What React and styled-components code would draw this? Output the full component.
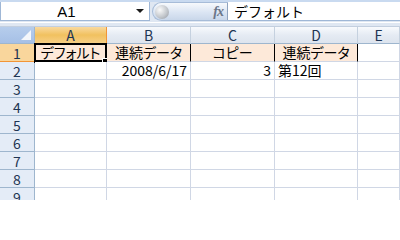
import React from 'react';
import styled, { createGlobalStyle, css } from 'styled-components';

const GlobalStyle = createGlobalStyle`
  html, body {
    margin: 0;
    padding: 0;
    background: #ffffff;
  }
  body {
    font-family: "Noto Sans CJK JP", "Liberation Sans", sans-serif;
  }
`;

const columns = ['A', 'B', 'C', 'D', 'E'];

const rows = [
  { n: 1, cells: ['デフォルト', '連続データ', 'コピー', '連続データ', ''] },
  { n: 2, cells: ['', '2008/6/17', '3', '第12回', ''] },
  { n: 3 },
  { n: 4 },
  { n: 5 },
  { n: 6 },
  { n: 7 },
  { n: 8 },
  { n: 9 },
];

// alignment per cell of row 2
const rowTwoAlign = ['left', 'right', 'right', 'left', 'left'];

const App = () => {
  return (
    <>
      <GlobalStyle />
      <Window>
        <FormulaBar>
          <NameBox>
            <NameText>A1</NameText>
            <DropArrow />
          </NameBox>
          <Orb>
            <OrbKnob />
            <Fx>fx</Fx>
          </Orb>
          <FormulaInput>デフォルト</FormulaInput>
        </FormulaBar>

        <Sheet>
          <Corner>
            <CornerTriangle />
          </Corner>
          {columns.map(col => (
            <ColHeader key={col} $selected={col === 'A'}>
              {col}
            </ColHeader>
          ))}

          {rows.map(row => (
            <React.Fragment key={row.n}>
              <RowHeader $selected={row.n === 1}>{row.n}</RowHeader>
              {columns.map((col, i) => {
                const value = row.cells ? row.cells[i] : '';
                const filled = row.n === 1 && i < 4;
                const align = row.n === 1 ? 'center' : rowTwoAlign[i];
                return (
                  <Cell
                    key={col}
                    $filled={filled}
                    $boxed={filled && i > 0}
                    $align={align}
                  >
                    {value}
                    {row.n === 1 && i === 0 && (
                      <Selection>
                        <FillHandle />
                      </Selection>
                    )}
                  </Cell>
                );
              })}
            </React.Fragment>
          ))}
        </Sheet>
      </Window>
    </>
  );
};

const Window = styled.div`
  width: 400px;
  height: 200px;
  overflow: hidden;
  background: #ffffff;
`;

const FormulaBar = styled.div`
  display: flex;
  align-items: stretch;
  height: 27px;
  box-sizing: border-box;
  padding: 2px 0 5px 0;
  background: linear-gradient(#c9daf0 0, #c9daf0 2px, #dfe7f2 2px);
  border-bottom: 1px solid #c3cfdf;
  position: relative;

  &::after {
    content: '';
    position: absolute;
    left: 0;
    right: 0;
    bottom: 3px;
    height: 1px;
    background: #ffffff;
  }
`;

const NameBox = styled.div`
  width: 150px;
  display: flex;
  align-items: center;
  background: #ffffff;
  border: 1px solid #9fb7d6;
  border-top: none;
  box-sizing: border-box;
`;

const NameText = styled.span`
  flex: 1;
  text-align: center;
  font-family: 'Liberation Sans', sans-serif;
  font-size: 15px;
  line-height: 17px;
  color: #000000;
  padding-right: 4px;
`;

const DropArrow = styled.span`
  width: 0;
  height: 0;
  margin-right: 5px;
  border-left: 4px solid transparent;
  border-right: 4px solid transparent;
  border-top: 4px solid #1a1a1a;
`;

const Orb = styled.div`
  width: 76px;
  margin-left: 2px;
  display: flex;
  align-items: center;
  justify-content: space-between;
  box-sizing: border-box;
  border-radius: 10px 0 0 10px;
  border: 1px solid #a7bcd8;
  border-right: 1px solid #8ea3bf;
  background: linear-gradient(#f7f9fc, #dbe5f3 55%, #c9d7ea);
`;

const OrbKnob = styled.span`
  width: 14px;
  height: 14px;
  margin-left: 2px;
  border-radius: 50%;
  background: radial-gradient(circle at 35% 35%, #fafafa 0, #c4c8cd 55%, #8f959d 100%);
`;

const Fx = styled.span`
  font-family: 'Liberation Serif', serif;
  font-style: italic;
  font-weight: bold;
  font-size: 14px;
  line-height: 16px;
  color: #6b7689;
  margin-right: 4px;
  letter-spacing: -1px;
`;

const FormulaInput = styled.div`
  flex: 1;
  display: flex;
  align-items: center;
  padding-left: 6px;
  background: #ffffff;
  border-bottom: 1px solid #9fb7d6;
  font-size: 14px;
  line-height: 16px;
  color: #000000;
`;

const Sheet = styled.div`
  display: grid;
  grid-template-columns: 35px 72px 84px 84px 83px 1fr;
  grid-template-rows: 17px;
  grid-auto-rows: 18px;
`;

const headerText = css`
  display: flex;
  align-items: center;
  justify-content: center;
  box-sizing: border-box;
  font-size: 14px;
  line-height: 14px;
  color: #1e3553;
  font-family: 'Noto Sans CJK JP', 'Liberation Sans', sans-serif;
`;

const Corner = styled.div`
  position: relative;
  box-sizing: border-box;
  background: linear-gradient(#b6cdec, #a6c0e6);
  border-right: 1px solid #9eb6ce;
  border-bottom: 1px solid #9eb6ce;
`;

const CornerTriangle = styled.span`
  position: absolute;
  right: 3px;
  bottom: 3px;
  width: 0;
  height: 0;
  border-left: 10px solid transparent;
  border-bottom: 10px solid #f4f7fb;
`;

const ColHeader = styled.div`
  ${headerText}
  border-right: 1px solid ${p => (p.$selected ? '#f29536' : '#c5d1df')};
  border-bottom: 1px solid ${p => (p.$selected ? '#f29536' : '#9eb6ce')};
  background: ${p =>
    p.$selected
      ? 'linear-gradient(#f9d99f, #f1c15f 50%, #f6cf85)'
      : 'linear-gradient(#f8fafd, #e5ebf3 50%, #dde4ee)'};
`;

const RowHeader = styled.div`
  ${headerText}
  border-right: 1px solid ${p => (p.$selected ? '#f29536' : '#9eb6ce')};
  border-bottom: 1px solid ${p => (p.$selected ? '#f29536' : '#9eb6ce')};
  background: ${p => (p.$selected ? '#f9d69c' : '#e4ecf7')};
`;

const Cell = styled.div`
  position: relative;
  display: flex;
  align-items: center;
  justify-content: ${p =>
    p.$align === 'right' ? 'flex-end' : p.$align === 'center' ? 'center' : 'flex-start'};
  box-sizing: border-box;
  padding: 0 ${p => (p.$align === 'center' ? '0' : '3px')};
  font-size: 14px;
  line-height: 15px;
  font-feature-settings: 'palt';
  color: #000000;
  white-space: nowrap;
  background: ${p => (p.$filled ? '#fde9d9' : '#ffffff')};
  border-right: 1px solid ${p => (p.$boxed ? '#000000' : '#d0d7e5')};
  border-bottom: 1px solid #d0d7e5;
`;

const Selection = styled.span`
  position: absolute;
  left: -1px;
  top: -1px;
  right: -1px;
  bottom: -2px;
  border: 2px solid #000000;
  border-bottom-width: 3px;
  pointer-events: none;
`;

const FillHandle = styled.span`
  position: absolute;
  right: -4px;
  bottom: -5px;
  width: 5px;
  height: 5px;
  background: #000000;
  border: 1px solid #ffffff;
`;

export default App;
